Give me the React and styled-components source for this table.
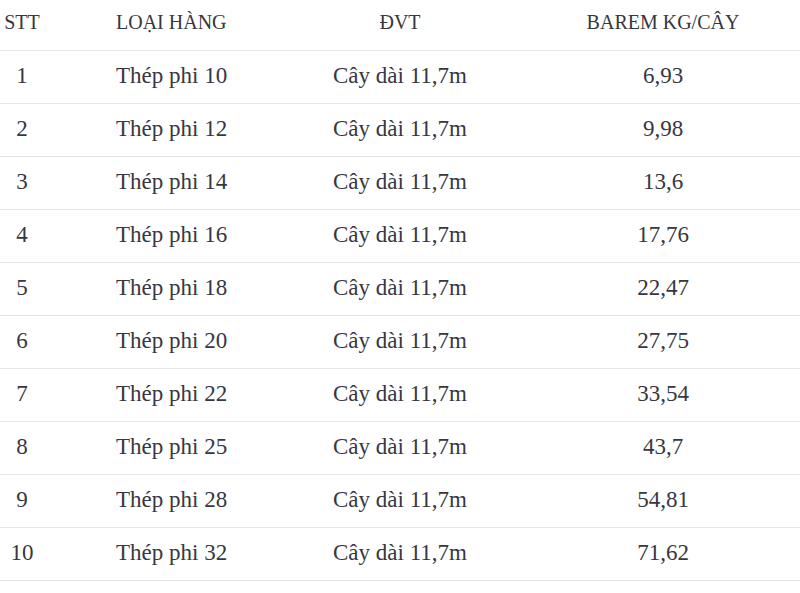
import React from "react";
import styled, { createGlobalStyle } from "styled-components";

const rows = [
  ["1", "Thép phi 10", "6,93"],
  ["2", "Thép phi 12", "9,98"],
  ["3", "Thép phi 14", "13,6"],
  ["4", "Thép phi 16", "17,76"],
  ["5", "Thép phi 18", "22,47"],
  ["6", "Thép phi 20", "27,75"],
  ["7", "Thép phi 22", "33,54"],
  ["8", "Thép phi 25", "43,7"],
  ["9", "Thép phi 28", "54,81"],
  ["10", "Thép phi 32", "71,62"],
];

const Global = createGlobalStyle`
  body {
    margin: 0;
    background: #fff;
    font-family: "Liberation Serif", "Times New Roman", serif;
    color: #373742;
  }
`;

const Table = styled.table`
  width: 800px;
  border-collapse: collapse;
  table-layout: fixed;
`;

const Row = styled.tr`
  height: ${(p) => (p.$head ? "50px" : "53px")};
  border-bottom: 1px solid #e1e6ea;
`;

const Cell = styled.td`
  padding: 0 ${(p) => p.$pr || "0"} ${(p) => (p.$head ? "4px" : "1px")} ${(p) => p.$pl || "0"};
  text-align: ${(p) => p.$align || "center"};
  font-weight: normal;
  font-size: ${(p) => (p.$head ? "20px" : "23px")};
  white-space: nowrap;
`;

export default function App() {
  return (
    <>
      <Global />
      <Table>
        <colgroup>
          <col style={{ width: 44 }} />
          <col style={{ width: 226 }} />
          <col style={{ width: 260 }} />
          <col style={{ width: 270 }} />
        </colgroup>
        <thead>
          <Row $head>
            <Cell as="th" $head>STT</Cell>
            <Cell as="th" $head $align="left" $pl="72px">LOẠI HÀNG</Cell>
            <Cell as="th" $head>ĐVT</Cell>
            <Cell as="th" $head $pr="4px">BAREM KG/CÂY</Cell>
          </Row>
        </thead>
        <tbody>
          {rows.map(([n, name, kg]) => (
            <Row key={n}>
              <Cell>{n}</Cell>
              <Cell $align="left" $pl="72px">{name}</Cell>
              <Cell>Cây dài 11,7m</Cell>
              <Cell $pr="4px">{kg}</Cell>
            </Row>
          ))}
        </tbody>
      </Table>
    </>
  );
}
